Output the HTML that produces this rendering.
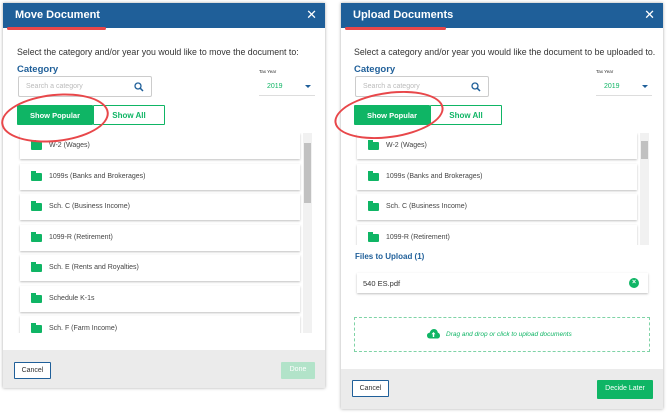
<!DOCTYPE html>
<html><head><meta charset="utf-8"><style>
*{box-sizing:border-box;margin:0;padding:0}
body{width:667px;height:415px;background:#fff;font-family:"Liberation Sans",sans-serif;position:relative;overflow:hidden}
.a{position:absolute}
.panel{position:absolute;background:#fff;box-shadow:0 0 3px rgba(0,0,0,.35)}
.hdr{position:absolute;left:0;top:0;right:0;height:25px;background:#1f5f99;color:#fff;font-weight:bold;font-size:11px;padding:6px 0 0 12px}
.x{position:absolute;right:8px;top:4px;color:#fff;font-size:13px;font-weight:normal}
.red{position:absolute;height:3px;background:#e8474a;border-radius:2px}
.t{font-size:8.8px;color:#333}
.lbl{font-size:9.5px;font-weight:bold;color:#1f5f99}
.search{position:absolute;width:134px;height:21px;border:1px solid #ccc;border-radius:2px;font-size:7px;color:#bbb;padding:6px 0 0 7px}
.row{position:absolute;height:26px;background:#fff;box-shadow:0 1px 2px rgba(0,0,0,.25);font-size:7px;color:#444;padding:9px 0 0 29px}
.row i{position:absolute;left:11px;top:9px;width:11px;height:8px;background:#0fb565;border-radius:1px}
.row i:before{content:"";position:absolute;left:0;top:-2px;width:5px;height:3px;background:#0fb565}
.sb{position:absolute;width:9px;background:#f1f1f1}
.footer{position:absolute;left:0;right:0;bottom:0;background:#ebebeb}
.btn{position:absolute;font-size:7px;text-align:center;border-radius:1px}
.oval{position:absolute;border:2px solid #e8474a;border-radius:50%}
</style></head><body>

<!-- LEFT -->
<div class="panel" style="left:3px;top:3px;width:322px;height:385px">
  <div class="hdr">Move Document<span class="x">✕</span></div>
  <div class="t a" style="left:14px;top:44px">Select the category and/or year you would like to move the document to:</div>
  <div class="lbl a" style="left:14px;top:61px">Category</div>
  <div class="search" style="left:15px;top:73px">Search a category<svg class="a" style="right:7px;top:5px" width="10" height="10" viewBox="0 0 10 10"><circle cx="4" cy="4" r="3" fill="none" stroke="#1f5f99" stroke-width="1.3"/><path d="M6.2 6.2L9 9" stroke="#1f5f99" stroke-width="1.5"/></svg></div>
  <div class="a" style="left:256px;top:66px;font-size:4.5px;color:#333">Tax Year</div>
  <div class="a" style="left:256px;top:74px;width:56px;height:19px;border-bottom:1px solid #ddd;font-size:7px;color:#0fb565;padding-top:6px;padding-left:8px">2019<span class="a" style="right:4px;top:8px;border:3px solid transparent;border-top:3px solid #1f5f99"></span></div>
  <div class="btn" style="left:14px;top:102px;width:76px;height:20px;background:#0fb565;color:#fff;font-weight:bold;font-size:7.5px;padding-top:6px">Show Popular</div>
  <div class="btn" style="left:90px;top:102px;width:72px;height:20px;border:1px solid #0fb565;color:#0fb565;font-weight:bold;font-size:8px;padding-top:5px">Show All</div>
  <div class="a" style="left:0;top:130px;width:310px;height:200px;overflow:hidden">
    <div class="row" style="left:17px;top:0;width:280px"><i></i>W-2 (Wages)</div>
    <div class="row" style="left:17px;top:31px;width:280px"><i></i>1099s (Banks and Brokerages)</div>
    <div class="row" style="left:17px;top:61px;width:280px"><i></i>Sch. C (Business Income)</div>
    <div class="row" style="left:17px;top:92px;width:280px"><i></i>1099-R (Retirement)</div>
    <div class="row" style="left:17px;top:122px;width:280px"><i></i>Sch. E (Rents and Royalties)</div>
    <div class="row" style="left:17px;top:153px;width:280px"><i></i>Schedule K-1s</div>
    <div class="row" style="left:17px;top:183px;width:280px"><i></i>Sch. F (Farm Income)</div>
  </div>
  <div class="sb" style="left:300px;top:130px;height:200px"><div class="a" style="left:1px;top:10px;width:7px;height:60px;background:#c1c1c1"></div></div>
  <div class="footer" style="height:38px">
    <div class="btn" style="left:11px;top:12px;width:37px;height:17px;border:1px solid #1f5f99;background:#fff;color:#333;padding-top:4px">Cancel</div>
    <div class="btn" style="left:278px;top:12px;width:34px;height:17px;background:#b2e3c9;color:#fff;padding-top:4px">Done</div>
  </div>
</div>
<div class="red" style="left:7px;top:27px;width:99px"></div>
<div class="oval" style="left:1px;top:94px;width:108px;height:48px;transform:rotate(-6deg)"></div>

<!-- RIGHT -->
<div class="panel" style="left:341px;top:3px;width:322px;height:406px">
  <div class="hdr">Upload Documents<span class="x">✕</span></div>
  <div class="t a" style="left:13px;top:44px">Select a category and/or year you would like the document to be uploaded to.</div>
  <div class="lbl a" style="left:13px;top:61px">Category</div>
  <div class="search" style="left:14px;top:73px">Search a category<svg class="a" style="right:7px;top:5px" width="10" height="10" viewBox="0 0 10 10"><circle cx="4" cy="4" r="3" fill="none" stroke="#1f5f99" stroke-width="1.3"/><path d="M6.2 6.2L9 9" stroke="#1f5f99" stroke-width="1.5"/></svg></div>
  <div class="a" style="left:255px;top:66px;font-size:4.5px;color:#333">Tax Year</div>
  <div class="a" style="left:255px;top:74px;width:56px;height:19px;border-bottom:1px solid #ddd;font-size:7px;color:#0fb565;padding-top:6px;padding-left:8px">2019<span class="a" style="right:4px;top:8px;border:3px solid transparent;border-top:3px solid #1f5f99"></span></div>
  <div class="btn" style="left:13px;top:102px;width:76px;height:20px;background:#0fb565;color:#fff;font-weight:bold;font-size:7.5px;padding-top:6px">Show Popular</div>
  <div class="btn" style="left:89px;top:102px;width:72px;height:20px;border:1px solid #0fb565;color:#0fb565;font-weight:bold;font-size:8px;padding-top:5px">Show All</div>
  <div class="a" style="left:0;top:130px;width:310px;height:112px;overflow:hidden">
    <div class="row" style="left:16px;top:0;width:280px"><i></i>W-2 (Wages)</div>
    <div class="row" style="left:16px;top:31px;width:280px"><i></i>1099s (Banks and Brokerages)</div>
    <div class="row" style="left:16px;top:61px;width:280px"><i></i>Sch. C (Business Income)</div>
    <div class="row" style="left:16px;top:92px;width:280px"><i></i>1099-R (Retirement)</div>
  </div>
  <div class="sb" style="left:299px;top:130px;height:112px"><div class="a" style="left:1px;top:8px;width:7px;height:18px;background:#c1c1c1"></div></div>
  <div class="lbl a" style="left:14px;top:249px;font-size:8px">Files to Upload (1)</div>
  <div class="a" style="left:16px;top:270px;width:291px;height:20px;box-shadow:0 1px 2px rgba(0,0,0,.25);font-size:7.5px;color:#333;padding:6px 0 0 6px">540 ES.pdf<span class="a" style="right:9px;top:5px;width:10px;height:10px;border-radius:50%;background:#0fb565;color:#fff;font-size:7px;line-height:10px;text-align:center;font-weight:bold">×</span></div>
  <div class="a" style="left:13px;top:314px;width:296px;height:35px;border:1px dashed #7fd3a6;font-size:6.5px;font-style:italic;color:#0fb565;padding:13px 0 0 91px"><svg class="a" style="left:72px;top:11px" width="13" height="10" viewBox="0 0 13 10"><path d="M3 9.5C1 9.5 0 8 0 6.5S1.2 3.8 2.7 3.8C3.3 1.5 5 0 7 0s3.6 1.6 3.8 3.6C12 3.8 13 5 13 6.6 13 8.2 12 9.5 10.5 9.5z" fill="#0fb565"/><path d="M6.5 3L4.5 5.3h1.3V8h1.4V5.3h1.3z" fill="#fff"/></svg>Drag and drop or click to upload documents</div>
  <div class="footer" style="height:40px">
    <div class="btn" style="left:11px;top:11px;width:37px;height:17px;border:1px solid #1f5f99;background:#fff;color:#333;padding-top:4px">Cancel</div>
    <div class="btn" style="left:256px;top:11px;width:56px;height:19px;background:#0fb565;color:#fff;padding-top:5px">Decide Later</div>
  </div>
</div>
<div class="red" style="left:345px;top:27px;width:101px"></div>
<div class="oval" style="left:334px;top:92px;width:110px;height:46px;transform:rotate(-8deg)"></div>
</body></html>
